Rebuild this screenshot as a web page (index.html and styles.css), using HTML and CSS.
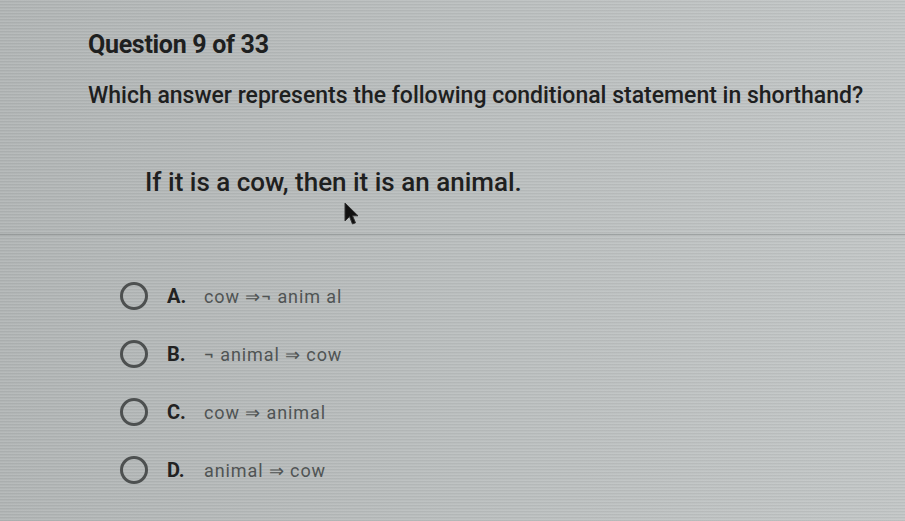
FILE: index.html
```html
<!DOCTYPE html>
<html lang="en">

<head>
    <meta charset="UTF-8">
    <meta name="viewport" content="width=device-width, initial-scale=1.0">
    <title>Question 9 of 33</title>
    <link rel="stylesheet" href="styles.css">
</head>

<body>
    <div class="question">
        <h1 class="question-number">Question 9 of 33</h1>
        <p class="prompt">Which answer represents the following conditional statement in shorthand?</p>
        <p class="statement">If it is a cow, then it is an animal.</p>
        <div class="cursor-row">
            <svg class="cursor" width="15" height="24" viewBox="0 0 15 24">
                <path d="M1 1 L1 19 L5.5 14.5 L8.5 22 L11.5 20.8 L8.5 13.8 L14 13.8 Z" fill="#111" stroke="#333" stroke-width="1" />
            </svg>
        </div>
    </div>

    <hr class="divider">

    <!-- answer choices -->
    <div class="choices">
        <label class="choice">
            <span class="radio"></span>
            <span class="letter">A.</span>
            <span class="expr">cow &rArr;&not; anim al</span>
        </label>
        <label class="choice">
            <span class="radio"></span>
            <span class="letter">B.</span>
            <span class="expr">&not; animal &rArr; cow</span>
        </label>
        <label class="choice">
            <span class="radio"></span>
            <span class="letter">C.</span>
            <span class="expr">cow &rArr; animal</span>
        </label>
        <label class="choice">
            <span class="radio"></span>
            <span class="letter">D.</span>
            <span class="expr">animal &rArr; cow</span>
        </label>
    </div>
</body>

</html>
```

FILE: styles.css
```css
body {
    font-family: Roboto, "Liberation Sans", Arial, sans-serif;
    color: #1e2020;
    margin: 0;
    padding: 0;
    height: 521px;
    overflow: hidden;
    background-color: #b7bbbb;
    background-image:
        repeating-linear-gradient(180deg, rgba(255, 255, 255, 0.08) 0 1px, rgba(0, 0, 0, 0.04) 1px 2px, transparent 2px 3px),
        linear-gradient(90deg, #b1b5b5 0%, #b9bdbd 45%, #c2c6c6 100%);
}

.question {
    padding: 29px 0 0 88px;
}

.question-number {
    font-size: 25px;
    font-weight: 700;
    margin: 0;
    line-height: 32px;
    letter-spacing: -0.3px;
}

.prompt {
    font-size: 23px;
    font-weight: 500;
    margin: 20px 0 0 0;
    line-height: 30px;
}

.statement {
    font-size: 26px;
    font-weight: 500;
    margin: 55px 0 0 57px;
    line-height: 32px;
}

.cursor-row {
    height: 28px;
    padding-left: 256px;
}

.cursor {
    display: block;
    margin-top: 4px;
}

.divider {
    border: none;
    border-top: 1px solid rgba(90, 95, 95, 0.35);
    margin: 4px 0 0 0;
}

.choices {
    display: flex;
    flex-direction: column;
    gap: 30px;
    padding: 47px 0 0 120px;
}

.choice {
    display: flex;
    align-items: center;
    height: 28px;
}

.radio {
    width: 22px;
    height: 22px;
    border: 3px solid #4d5050;
    border-radius: 50%;
    margin-right: 19px;
}

.letter {
    font-weight: 700;
    font-size: 20px;
    color: #222;
    width: 37px;
}

.expr {
    font-size: 18px;
    color: #505454;
    letter-spacing: 0.9px;
}
```
